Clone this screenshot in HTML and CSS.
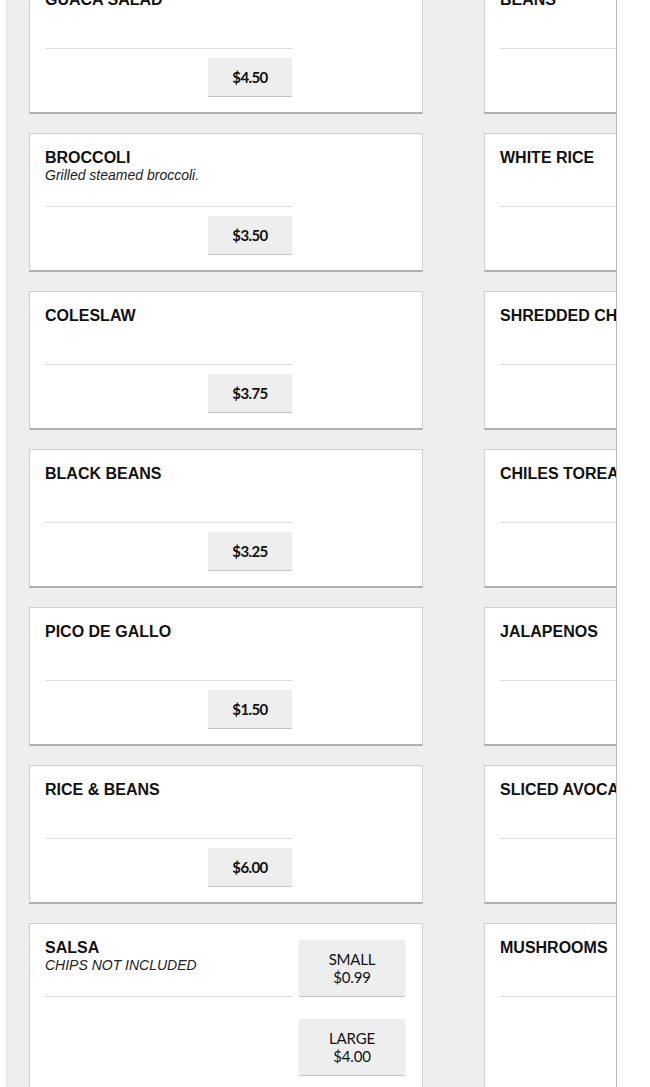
FILE: index.html
```html
<!DOCTYPE html>
<html lang="en">
<head>
    <meta charset="UTF-8">
    <meta name="viewport" content="width=device-width, initial-scale=1.0">
    <title>Sides</title>
    <link rel="stylesheet" href="styles.css">
</head>
<body>
    <div class="panel">
        <div class="menu-grid">
            <div class="item">
                <div class="item-main">
                    <div class="item-head">
                        <div class="item-name">GUACA SALAD</div>
                    </div>
                    <div class="price-row"><button class="price">$4.50</button></div>
                </div>
            </div>
            <div class="item">
                <div class="item-main">
                    <div class="item-head">
                        <div class="item-name">BEANS</div>
                    </div>
                    <div class="price-row"><button class="price">$3.50</button></div>
                </div>
            </div>

            <div class="item">
                <div class="item-main">
                    <div class="item-head">
                        <div class="item-name">BROCCOLI</div>
                        <div class="item-desc">Grilled steamed broccoli.</div>
                    </div>
                    <div class="price-row"><button class="price">$3.50</button></div>
                </div>
            </div>
            <div class="item">
                <div class="item-main">
                    <div class="item-head">
                        <div class="item-name">WHITE RICE</div>
                    </div>
                    <div class="price-row"><button class="price">$3.00</button></div>
                </div>
            </div>

            <div class="item">
                <div class="item-main">
                    <div class="item-head">
                        <div class="item-name">COLESLAW</div>
                    </div>
                    <div class="price-row"><button class="price">$3.75</button></div>
                </div>
            </div>
            <div class="item">
                <div class="item-main">
                    <div class="item-head">
                        <div class="item-name">SHREDDED CHEESE</div>
                    </div>
                    <div class="price-row"><button class="price">$1.50</button></div>
                </div>
            </div>

            <div class="item">
                <div class="item-main">
                    <div class="item-head">
                        <div class="item-name">BLACK BEANS</div>
                    </div>
                    <div class="price-row"><button class="price">$3.25</button></div>
                </div>
            </div>
            <div class="item">
                <div class="item-main">
                    <div class="item-head">
                        <div class="item-name">CHILES TOREADOS</div>
                    </div>
                    <div class="price-row"><button class="price">$2.00</button></div>
                </div>
            </div>

            <div class="item">
                <div class="item-main">
                    <div class="item-head">
                        <div class="item-name">PICO DE GALLO</div>
                    </div>
                    <div class="price-row"><button class="price">$1.50</button></div>
                </div>
            </div>
            <div class="item">
                <div class="item-main">
                    <div class="item-head">
                        <div class="item-name">JALAPENOS</div>
                    </div>
                    <div class="price-row"><button class="price">$1.00</button></div>
                </div>
            </div>

            <div class="item">
                <div class="item-main">
                    <div class="item-head">
                        <div class="item-name">RICE &amp; BEANS</div>
                    </div>
                    <div class="price-row"><button class="price">$6.00</button></div>
                </div>
            </div>
            <div class="item">
                <div class="item-main">
                    <div class="item-head">
                        <div class="item-name">SLICED AVOCADO</div>
                    </div>
                    <div class="price-row"><button class="price">$2.50</button></div>
                </div>
            </div>

            <div class="item">
                <div class="item-main">
                    <div class="item-head">
                        <div class="item-name">SALSA</div>
                        <div class="item-desc">CHIPS NOT INCLUDED</div>
                    </div>
                </div>
                <div class="price-list">
                    <button class="price size">SMALL<br>$0.99</button>
                    <button class="price size">LARGE<br>$4.00</button>
                </div>
            </div>
            <div class="item">
                <div class="item-main">
                    <div class="item-head">
                        <div class="item-name">MUSHROOMS</div>
                    </div>
                </div>
                <div class="price-list">
                    <button class="price size">SMALL<br>$1.50</button>
                    <button class="price size">LARGE<br>$3.00</button>
                </div>
            </div>
        </div>
    </div>
</body>
</html>
```

FILE: styles.css
```css
body {
    margin: 0;
    padding: 0;
    background-color: #ffffff;
    font-family: "Liberation Sans", Arial, sans-serif;
    color: #111;
}

.panel {
    width: 611px;
    height: 1200px;
    margin: -44px 0 0 6px;
    padding: 19px 0 0 22px;
    box-sizing: border-box;
    background: #eeeeee;
    border-left: 1px solid #e2e2e2;
    border-right: 1px solid #bcbcbc;
    overflow: hidden;
}

.menu-grid {
    display: grid;
    grid-template-columns: 394px 394px;
    column-gap: 61px;
    row-gap: 19px;
    align-items: start;
}

.item {
    display: flex;
    gap: 6px;
    padding: 15px;
    background: #ffffff;
    border: 1px solid #cfcfcf;
    border-bottom: 2px solid #b0b0b0;
}

.item-main {
    width: 248px;
    flex-shrink: 0;
}

.item-head {
    height: 57px;
    border-bottom: 1px solid #dedede;
}

.item-name {
    font-size: 16px;
    font-weight: bold;
    line-height: 18px;
}

.item-desc {
    font-size: 14px;
    font-style: italic;
    line-height: 17px;
    color: #222;
}

.price-row {
    display: flex;
    justify-content: flex-end;
    margin-top: 9px;
    padding-right: 1px;
}

.price {
    width: 84px;
    height: 39px;
    padding: 0;
    font-family: Lato, "Liberation Sans", sans-serif;
    font-size: 15px;
    font-weight: bold;
    letter-spacing: -0.6px;
    color: #111;
    background: #eeeeee;
    border: none;
    border-bottom: 1px solid #c4c4c4;
    border-radius: 0;
    cursor: pointer;
}

.price-list {
    display: flex;
    flex-direction: column;
    gap: 22px;
    padding-top: 1px;
}

.price.size {
    width: 106px;
    height: 57px;
    line-height: 18px;
    font-weight: normal;
    letter-spacing: -0.2px;
}
```
